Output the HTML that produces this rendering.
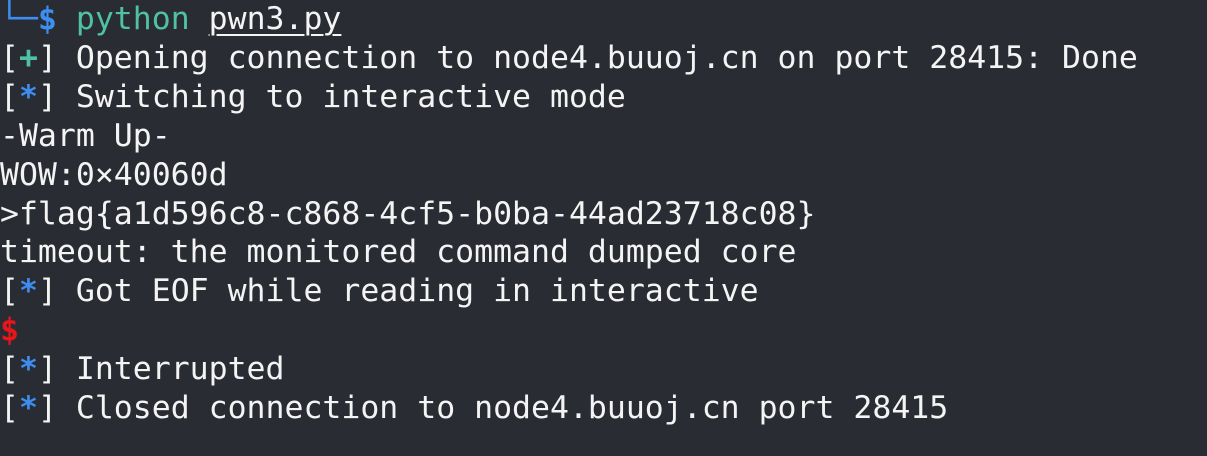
<!DOCTYPE html>
<html><head><style>
html,body{margin:0;padding:0;background:#2a2c33;width:1207px;height:456px;overflow:hidden}
pre{margin:0;position:absolute;left:0;top:0px;font-family:"DejaVu Sans Mono","Liberation Mono",monospace;font-size:31.5px;line-height:38.9px;color:#f4f4f4}
.g{color:#4fc1a6}.b{color:#3d8ef0;font-weight:bold}.r{color:#e8161a;font-weight:bold}.bl{color:#3d8ef0;font-weight:bold}
.u{text-decoration:underline;text-decoration-thickness:2px;text-underline-offset:5px}
</style></head><body>
<pre><span class="bl">└─$</span> <span class="g">python</span> <span class="u">pwn3.py</span>
[<span class="g" style="font-weight:bold">+</span>] Opening connection to node4.buuoj.cn on port 28415: Done
[<span class="b">*</span>] Switching to interactive mode
-Warm Up-
WOW:0×40060d
&gt;flag{a1d596c8-c868-4cf5-b0ba-44ad23718c08}
timeout: the monitored command dumped core
[<span class="b">*</span>] Got EOF while reading in interactive
<span class="r">$</span>
[<span class="b">*</span>] Interrupted
[<span class="b">*</span>] Closed connection to node4.buuoj.cn port 28415</pre>
</body></html>
